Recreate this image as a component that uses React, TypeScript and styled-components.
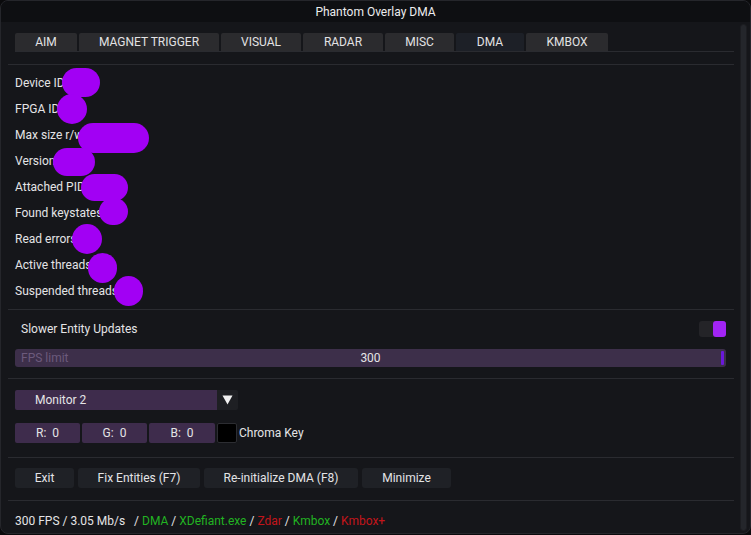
import React from "react";
import styled, { createGlobalStyle } from "styled-components";

const Global = createGlobalStyle`
  html, body { margin: 0; padding: 0; background: #0a0a0c; }
  body { font-family: Roboto, "Liberation Sans", sans-serif; font-size: 12px; color: #e4e4e6; }
  * { box-sizing: border-box; }
`;

const Window = styled.div`
  width: 751px;
  height: 534px;
  border: 1px solid #25262b;
  border-radius: 8px;
  background: #15161a;
  display: flex;
  flex-direction: column;
  overflow: hidden;
`;

const TitleBar = styled.div`
  height: 21px;
  flex: none;
  background: #0e0f12;
  display: flex;
  align-items: center;
  justify-content: center;
  color: #ececee;
  font-size: 12px;
`;

const Body = styled.div`
  flex: 1;
  display: flex;
`;

const Content = styled.div`
  flex: 1;
  padding: 11px 0 0 7px;
  display: flex;
  flex-direction: column;
`;

const ScrollTrack = styled.div`
  width: 16px;
  flex: none;
  padding: 2px 3px 2px 6px;
  display: flex;
`;

const ScrollThumb = styled.div`
  flex: 1;
  border-radius: 3px;
  background: #24262b;
  border: 1px solid #1c1d21;
`;

const Inset = styled.div`
  padding: 0 8px 0 7px;
`;

const TabRow = styled.div`
  display: flex;
  gap: 2px;
  margin-left: 7px;
  border-bottom: 1px solid #2a2b30;
`;

const Tab = styled.div<{ $w: number; $active?: boolean }>`
  width: ${(p) => p.$w}px;
  height: 18px;
  border-radius: 2px 2px 0 0;
  background: ${(p) => (p.$active ? "#1d2027" : "#2b2b2e")};
  display: flex;
  align-items: center;
  justify-content: center;
  color: #e2e2e4;
  font-size: 12px;
`;

const Separator = styled.div<{ $top: number; $bottom: number }>`
  height: 1px;
  background: #2a2b30;
  margin: ${(p) => p.$top}px 0 ${(p) => p.$bottom}px;
`;

const InfoList = styled.div`
  display: flex;
  flex-direction: column;
`;

const InfoRow = styled.div`
  position: relative;
  height: 26px;
  display: flex;
  align-items: center;
`;

/* redaction strokes painted over the values */
const Blot = styled.span<{ $x: number; $y: number; $w: number; $h: number }>`
  position: absolute;
  left: ${(p) => p.$x}px;
  top: ${(p) => p.$y}px;
  width: ${(p) => p.$w}px;
  height: ${(p) => p.$h}px;
  border-radius: ${(p) => p.$h / 2}px;
  background: #a200f4;
`;

const CheckRow = styled.div`
  height: 18px;
  display: flex;
  align-items: center;
  justify-content: space-between;
  padding-left: 6px;
`;

const Toggle = styled.div`
  width: 27px;
  height: 16px;
  display: flex;
  justify-content: flex-end;
  background: #242428;
  border-radius: 3px;
`;

const Knob = styled.div`
  width: 13px;
  height: 16px;
  border-radius: 3px;
  background: #a224f4;
`;

const Slider = styled.div`
  position: relative;
  margin-top: 11px;
  height: 18px;
  border-radius: 3px;
  background: #3d2f4a;
  display: flex;
  align-items: center;
  justify-content: center;
`;

const SliderLabel = styled.span`
  position: absolute;
  left: 6px;
  color: #6c5a7c;
`;

const SliderGrab = styled.span`
  position: absolute;
  right: 2px;
  top: 2px;
  bottom: 2px;
  width: 3px;
  border-radius: 1px;
  background: #6a18da;
`;

const ComboRow = styled.div`
  display: flex;
  height: 20px;
`;

const ComboValue = styled.div`
  width: 202px;
  background: #3e2c4c;
  border-radius: 2px 0 0 2px;
  display: flex;
  align-items: center;
  padding-left: 20px;
`;

const ComboArrow = styled.div`
  width: 21px;
  background: #1e1f23;
  border-radius: 0 2px 2px 0;
  display: flex;
  align-items: center;
  justify-content: center;
`;

const ColorRow = styled.div`
  display: flex;
  align-items: center;
  gap: 2px;
  margin-top: 13px;
  height: 20px;
`;

const Channel = styled.div<{ $w: number }>`
  width: ${(p) => p.$w}px;
  height: 20px;
  border-radius: 2px;
  background: #3e2c4c;
  display: flex;
  align-items: center;
  justify-content: center;
  white-space: pre;
`;

const Swatch = styled.div`
  width: 20px;
  height: 20px;
  border-radius: 2px;
  background: #000;
  border: 1px solid #2c2d32;
`;

const SwatchLabel = styled.span`
  margin-left: 0;
`;

const ButtonRow = styled.div`
  display: flex;
  gap: 4px;
`;

const Button = styled.div<{ $w: number }>`
  width: ${(p) => p.$w}px;
  height: 20px;
  border-radius: 3px;
  background: #1f2126;
  display: flex;
  align-items: center;
  justify-content: center;
`;

const Footer = styled.div`
  height: 16px;
  line-height: 16px;
  white-space: pre;
`;

const Status = styled.span<{ $ok: boolean }>`
  color: ${(p) => (p.$ok ? "#22b322" : "#c3151a")};
`;

const tabs = [
  { label: "AIM", w: 62 },
  { label: "MAGNET TRIGGER", w: 140 },
  { label: "VISUAL", w: 80 },
  { label: "RADAR", w: 80 },
  { label: "MISC", w: 69 },
  { label: "DMA", w: 68, active: true },
  { label: "KMBOX", w: 82 },
];

const info: { label: string; blots: { x: number; y: number; w: number; h: number }[] }[] = [
  { label: "Device ID", blots: [{ x: 47, y: -2, w: 38, h: 29 }] },
  { label: "FPGA ID", blots: [{ x: 42, y: -2, w: 30, h: 30 }] },
  { label: "Max size r/w", blots: [{ x: 63, y: 1, w: 71, h: 30 }] },
  { label: "Version", blots: [{ x: 38, y: 0, w: 42, h: 28 }] },
  { label: "Attached PID", blots: [{ x: 66, y: 0, w: 47, h: 27 }] },
  { label: "Found keystates", blots: [{ x: 84, y: -2, w: 29, h: 27 }] },
  { label: "Read errors", blots: [{ x: 57, y: -2, w: 30, h: 30 }] },
  { label: "Active threads", blots: [{ x: 73, y: 1, w: 29, h: 30 }] },
  { label: "Suspended threads", blots: [{ x: 99, y: -2, w: 29, h: 30 }] },
];

const buttons = [
  { label: "Exit", w: 59 },
  { label: "Fix Entities (F7)", w: 122 },
  { label: "Re-initialize DMA (F8)", w: 154 },
  { label: "Minimize", w: 89 },
];

const services: { name: string; ok: boolean }[] = [
  { name: "DMA", ok: true },
  { name: "XDefiant.exe", ok: true },
  { name: "Zdar", ok: false },
  { name: "Kmbox", ok: true },
  { name: "Kmbox+", ok: false },
];

export default function App() {
  return (
    <>
      <Global />
      <Window>
        <TitleBar>Phantom Overlay DMA</TitleBar>
        <Body>
          <Content>
            <TabRow>
              {tabs.map((t) => (
                <Tab key={t.label} $w={t.w} $active={t.active}>
                  {t.label}
                </Tab>
              ))}
            </TabRow>
            <Separator $top={12} $bottom={5} />
            <Inset>
              <InfoList>
                {info.map((row) => (
                  <InfoRow key={row.label}>
                    {row.label}
                    {row.blots.map((b, i) => (
                      <Blot key={i} $x={b.x} $y={b.y} $w={b.w} $h={b.h} />
                    ))}
                  </InfoRow>
                ))}
              </InfoList>
            </Inset>
            <Separator $top={5} $bottom={10} />
            <Inset>
              <CheckRow>
                Slower Entity Updates
                <Toggle>
                  <Knob />
                </Toggle>
              </CheckRow>
              <Slider>
                <SliderLabel>FPS limit</SliderLabel>
                300
                <SliderGrab />
              </Slider>
            </Inset>
            <Separator $top={11} $bottom={11} />
            <Inset>
              <ComboRow>
                <ComboValue>Monitor 2</ComboValue>
                <ComboArrow>
                  <svg width="11" height="10" viewBox="0 0 11 10">
                    <path d="M0.5 0.5 H10.5 L5.5 9.5 Z" fill="#f2f2f2" />
                  </svg>
                </ComboArrow>
              </ComboRow>
              <ColorRow>
                <Channel $w={65}>{"R:  0"}</Channel>
                <Channel $w={65}>{"G:  0"}</Channel>
                <Channel $w={66}>{"B:  0"}</Channel>
                <Swatch />
                <SwatchLabel>Chroma Key</SwatchLabel>
              </ColorRow>
            </Inset>
            <Separator $top={14} $bottom={10} />
            <Inset>
              <ButtonRow>
                {buttons.map((b) => (
                  <Button key={b.label} $w={b.w}>
                    {b.label}
                  </Button>
                ))}
              </ButtonRow>
            </Inset>
            <Separator $top={12} $bottom={12} />
            <Inset>
              <Footer>
                {"300 FPS / 3.05 Mb/s   "}
                {services.map((s) => (
                  <React.Fragment key={s.name}>
                    {"/ "}
                    <Status $ok={s.ok}>{s.name}</Status>
                    {" "}
                  </React.Fragment>
                ))}
              </Footer>
            </Inset>
          </Content>
          <ScrollTrack>
            <ScrollThumb />
          </ScrollTrack>
        </Body>
      </Window>
    </>
  );
}
